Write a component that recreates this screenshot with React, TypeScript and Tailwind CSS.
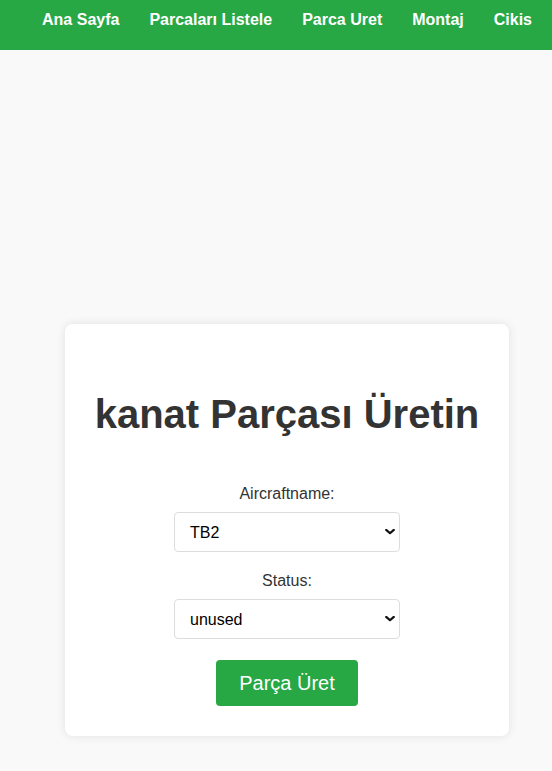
import React from "react";

const navLinks = ["Ana Sayfa", "Parcaları Listele", "Parca Uret", "Montaj", "Cikis"];

function Chevron() {
  return (
    <svg
      width="10"
      height="6"
      viewBox="0 0 10 6"
      fill="none"
      className="pointer-events-none absolute right-[5px] top-1/2 -translate-y-[55%]"
    >
      <path d="M1.2 1.2L5 4.6L8.8 1.2" stroke="#111" strokeWidth="2.2" strokeLinecap="round" strokeLinejoin="round" />
    </svg>
  );
}

function SelectField({ label, value, options }: { label: string; value: string; options: string[] }) {
  return (
    <div className="flex flex-col items-center">
      <label className="pt-[2px] text-[16px] leading-[18px] text-[#333]">{label}</label>
      <div className="relative mt-[9px] w-[226px]">
        <select
          defaultValue={value}
          className="h-[40px] w-full appearance-none rounded-[4px] border border-[#ddd] bg-white pl-[15px] pr-[24px] pt-[1px] text-[16px] text-black outline-none"
        >
          {options.map((o) => (
            <option key={o} value={o}>
              {o}
            </option>
          ))}
        </select>
        <Chevron />
      </div>
    </div>
  );
}

export default function App() {
  return (
    <div className="min-h-[771px] bg-[#f9f9f9] font-['Liberation_Sans',Arial,sans-serif]">
      <nav className="h-[50px] bg-[#28a745] pt-[8px]">
        <ul className="flex justify-end gap-[30px] pr-[20px]">
          {navLinks.map((l) => (
            <li key={l}>
              <a href="#" className="text-[16px] font-bold leading-[18px] text-white">
                {l}
              </a>
            </li>
          ))}
        </ul>
      </nav>

      <div className="pl-[65px] pt-[274px]">
        <div className="flex w-[444px] flex-col items-center rounded-[8px] bg-white pt-[67px] pb-[30px] shadow-[0_0_10px_rgba(0,0,0,0.1)]">
          <h1 className="text-[40px] font-bold leading-[46px] text-[#333]">kanat Parçası Üretin</h1>

          <div className="mt-[46px]">
            <SelectField label="Aircraftname:" value="TB2" options={["TB2", "AKINCI", "TB3", "KIZILELMA"]} />
          </div>
          <div className="mt-[18px]">
            <SelectField label="Status:" value="unused" options={["unused", "used"]} />
          </div>

          <button className="mt-[21px] h-[46px] w-[142px] rounded-[4px] bg-[#28a745] text-[20px] text-white">
            Parça Üret
          </button>
        </div>
      </div>
    </div>
  );
}
